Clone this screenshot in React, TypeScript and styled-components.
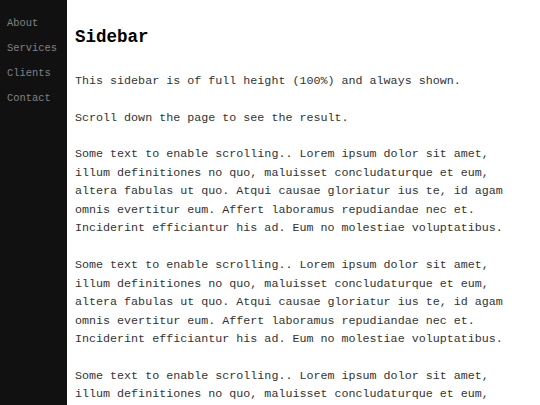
import React from "react";
import styled, { createGlobalStyle } from "styled-components";

const GlobalStyle = createGlobalStyle`
  html, body {
    margin: 0;
    padding: 0;
    height: 100%;
    background: #ffffff;
  }
  body {
    font-family: "Liberation Mono", "Courier New", monospace;
  }
  #root {
    height: 100%;
  }
`;

const Page = styled.div`
  display: flex;
  height: 100vh;
  overflow: hidden;
`;

const SideNav = styled.nav`
  flex: 0 0 67px;
  height: 100%;
  background: #111111;
  padding-top: 11px;
  box-sizing: border-box;
  overflow-x: hidden;
`;

const NavLink = styled.a`
  display: block;
  height: 25px;
  line-height: 25px;
  padding-left: 7px;
  font-size: 10.4px;
  color: #818181;
  text-decoration: none;
  white-space: nowrap;
  cursor: pointer;

  &:hover {
    color: #f1f1f1;
  }
`;

const Main = styled.main`
  flex: 1;
  overflow-y: auto;
  padding: 0 12px 0 8px;
  scrollbar-width: none;

  &::-webkit-scrollbar {
    display: none;
  }
`;

const Title = styled.h2`
  margin: 27px 0 25px;
  font-size: 17.5px;
  font-weight: bold;
  color: #000000;
`;

const Text = styled.p`
  margin: 18.2px 0;
  font-size: 11.7px;
  line-height: 18.5px;
  color: #333333;
`;

const links = ["About", "Services", "Clients", "Contact"];

const lorem =
  "Some text to enable scrolling.. Lorem ipsum dolor sit amet, illum definitiones no quo, maluisset concludaturque et eum, altera fabulas ut quo. Atqui causae gloriatur ius te, id agam omnis evertitur eum. Affert laboramus repudiandae nec et. Inciderint efficiantur his ad. Eum no molestiae voluptatibus.";

export default function App() {
  return (
    <>
      <GlobalStyle />
      <Page>
        <SideNav>
          {links.map((label) => (
            <NavLink key={label} href="#">
              {label}
            </NavLink>
          ))}
        </SideNav>
        <Main>
          <Title>Sidebar</Title>
          <Text>This sidebar is of full height (100%) and always shown.</Text>
          <Text>Scroll down the page to see the result.</Text>
          {[0, 1, 2, 3].map((i) => (
            <Text key={i}>{lorem}</Text>
          ))}
        </Main>
      </Page>
    </>
  );
}
